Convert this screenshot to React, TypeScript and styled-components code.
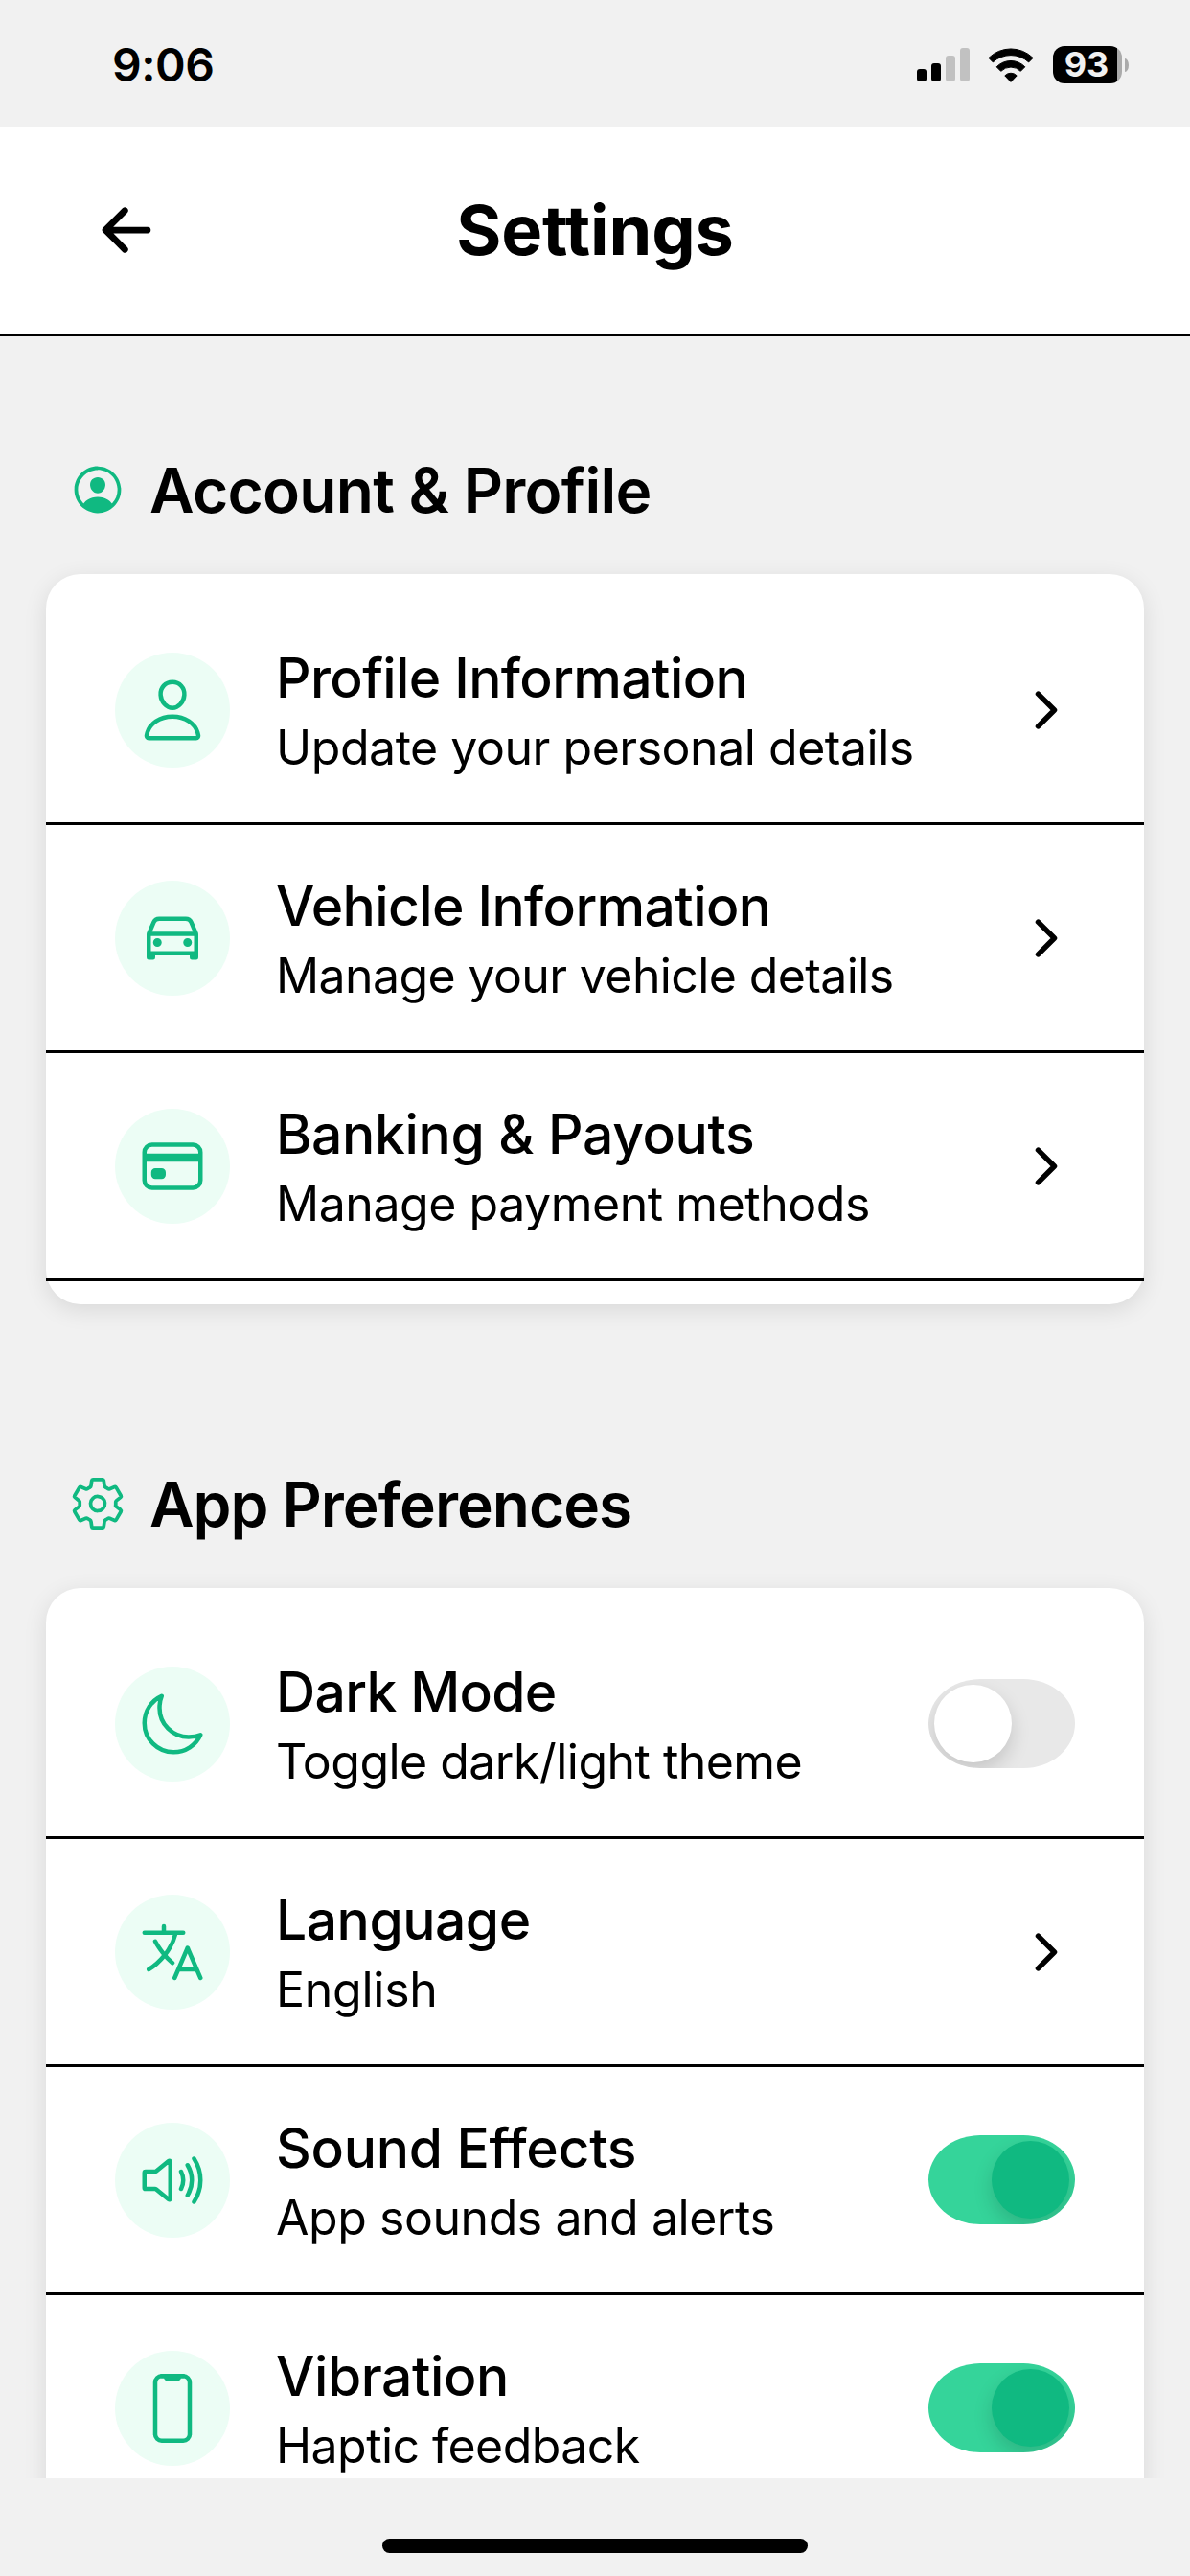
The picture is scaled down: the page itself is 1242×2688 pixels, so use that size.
import React, { useState } from 'react';
import styled, { createGlobalStyle } from 'styled-components';
import type { IconType } from 'react-icons';
import {
  IoArrowBack,
  IoCardOutline,
  IoCarOutline,
  IoChevronForward,
  IoLanguageOutline,
  IoMoonOutline,
  IoPersonCircleOutline,
  IoPersonOutline,
  IoPhonePortraitOutline,
  IoSettingsOutline,
  IoVolumeHighOutline,
} from 'react-icons/io5';

const color = {
  page: '#f1f1f1',
  surface: '#ffffff',
  text: '#000000',
  accent: '#10b981',
  accentTrack: '#35d49a',
  accentTint: '#ecfdf5',
  trackOff: '#e8e8e8',
  inactive: '#c1c1c1',
};

const GlobalStyle = createGlobalStyle`
  *, *::before, *::after { box-sizing: border-box; }
  body {
    margin: 0;
    background: ${color.page};
    color: ${color.text};
    font-family: Inter, "Liberation Sans", sans-serif;
  }
  svg { display: block; flex: none; }
`;

const Screen = styled.div`
  display: flex;
  flex-direction: column;
  width: 1242px;
  height: 2688px;
  overflow: hidden;
  background: ${color.page};
`;

/* Status bar */

const StatusBar = styled.div`
  flex: none;
  display: flex;
  justify-content: space-between;
  align-items: flex-start;
  height: 132px;
  padding: 48px 64px 0 117px;
`;

const Clock = styled.time`
  font-size: 48px;
  font-weight: 600;
  line-height: 39px;
  letter-spacing: -0.5px;
`;

const StatusIcons = styled.div`
  display: flex;
  align-items: center;
  height: 39px;
`;

const SignalBars = styled.div`
  display: flex;
  align-items: flex-end;
  gap: 5px;
  height: 35px;
  margin-right: 19px;
`;

const SignalBar = styled.span<{ $height: number; $active: boolean }>`
  width: 10px;
  height: ${({ $height }) => $height}px;
  border-radius: 3px;
  background: ${({ $active }) => ($active ? color.text : color.inactive)};
`;

const Battery = styled.div`
  display: flex;
  align-items: center;
  gap: 3px;
  margin-left: 20px;
`;

const BatteryBody = styled.div`
  display: flex;
  align-items: center;
  justify-content: center;
  width: 72px;
  height: 39px;
  padding-right: 2px;
  border-radius: 12px;
  background: linear-gradient(to right, #000 67px, #ababab 67px);
  color: ${color.page};
  font-size: 36px;
  font-weight: 700;
  line-height: 39px;
`;

const BatteryCap = styled.span`
  width: 4px;
  height: 14px;
  border-radius: 0 4px 4px 0 / 0 7px 7px 0;
  background: #ababab;
`;

/* Header */

const Header = styled.header`
  flex: none;
  display: grid;
  grid-template-columns: 72px 1fr 72px;
  align-items: center;
  height: 219px;
  padding: 0 96px;
  border-bottom: 3px solid ${color.text};
  background: ${color.surface};
`;

const PlainButton = styled.button`
  padding: 0;
  border: 0;
  background: none;
  color: inherit;
`;

const Title = styled.h1`
  margin: 0;
  font-size: 72px;
  font-weight: 700;
  line-height: 88px;
  letter-spacing: -0.1px;
  text-align: center;
`;

/* Content */

const Content = styled.main`
  flex: none;
  height: 2235px;
  overflow: hidden;
  padding: 110px 48px 0;
`;

const Section = styled.section`
  margin-bottom: 158px;
`;

const SectionHeader = styled.div`
  display: flex;
  align-items: center;
  gap: 24px;
  height: 100px;
  padding: 0 24px;
  margin-bottom: 38px;
  color: ${color.accent};
`;

const SectionTitle = styled.h2<{ $tracking: number }>`
  margin: 0;
  color: ${color.text};
  font-size: 64px;
  font-weight: 600;
  line-height: 80px;
  letter-spacing: ${({ $tracking }) => $tracking}px;
  padding-top: 1px;
`;

const Card = styled.div`
  padding: 24px 0;
  border-radius: 36px;
  background: ${color.surface};
  box-shadow: 0 6px 24px rgba(0, 0, 0, 0.1);
`;

const Row = styled.div`
  display: flex;
  align-items: center;
  height: 238px;
  padding: 1px 72px 0;
  border-bottom: 3px solid ${color.text};
`;

const IconBadge = styled.div`
  flex: none;
  display: flex;
  align-items: center;
  justify-content: center;
  width: 120px;
  height: 120px;
  margin-right: 48px;
  border-radius: 50%;
  background: ${color.accentTint};
  color: ${color.accent};
`;

const RowText = styled.div`
  flex: 1;
  white-space: nowrap;
`;

const RowTitle = styled.div<{ $tracking: number }>`
  font-size: 57px;
  font-weight: 500;
  line-height: 77px;
  letter-spacing: ${({ $tracking }) => $tracking}px;
`;

const RowDetail = styled.div<{ $tracking: number }>`
  font-size: 50px;
  font-weight: 400;
  line-height: 68px;
  letter-spacing: ${({ $tracking }) => $tracking}px;
`;

const SwitchTrack = styled.button<{ $on: boolean }>`
  flex: none;
  display: flex;
  align-items: center;
  justify-content: ${({ $on }) => ($on ? 'flex-end' : 'flex-start')};
  width: 153px;
  height: 93px;
  margin: 0 0 1px;
  padding: 0 6px;
  border: 0;
  border-radius: 54px / 46.5px;
  overflow: hidden;
  background: ${({ $on }) => ($on ? color.accentTrack : color.trackOff)};
`;

const SwitchThumb = styled.span<{ $on: boolean }>`
  width: 81px;
  height: 81px;
  border-radius: 50%;
  background: ${({ $on }) => ($on ? color.accent : color.surface)};
  box-shadow: 0 9px 20px rgba(0, 0, 0, 0.15);
`;

const HomeArea = styled.div`
  flex: 1;
  display: flex;
  justify-content: center;
  padding-top: 63px;
`;

const HomeIndicator = styled.div`
  width: 444px;
  height: 15px;
  border-radius: 8px;
  background: ${color.text};
`;

function WifiIcon() {
  return (
    <svg width="48" height="36" viewBox="0 0 48 36" fill="#000" stroke="#000" strokeWidth="1" strokeLinejoin="round">
      <path d="M0.9 10.4A33 33 0 0 1 47.1 10.4L42.7 14.9A27.6 27.6 0 0 0 5.3 14.9Z" />
      <path d="M9.2 19.8A20.5 20.5 0 0 1 38.8 19.8L34.3 24.3A14.6 14.6 0 0 0 13.7 24.3Z" />
      <path d="M17.8 28.9A8.6 8.6 0 0 1 30.2 28.9L24 35.4Z" />
    </svg>
  );
}

function Switch({ defaultOn }: { defaultOn: boolean }) {
  const [on, setOn] = useState(defaultOn);
  return (
    <SwitchTrack $on={on} role="switch" aria-checked={on} onClick={() => setOn(!on)}>
      <SwitchThumb $on={on} />
    </SwitchTrack>
  );
}

interface Item {
  icon: IconType;
  title: string;
  titleTracking: number;
  detail: string;
  detailTracking: number;
  toggle?: boolean;
}

interface Group {
  icon: IconType;
  title: string;
  tracking: number;
  items: Item[];
}

const groups: Group[] = [
  {
    icon: IoPersonCircleOutline,
    title: 'Account & Profile',
    tracking: -0.7,
    items: [
      { icon: IoPersonOutline, title: 'Profile Information', titleTracking: -0.61, detail: 'Update your personal details', detailTracking: -0.47 },
      { icon: IoCarOutline, title: 'Vehicle Information', titleTracking: -0.61, detail: 'Manage your vehicle details', detailTracking: -0.62 },
      { icon: IoCardOutline, title: 'Banking & Payouts', titleTracking: -0.35, detail: 'Manage payment methods', detailTracking: -0.46 },
    ],
  },
  {
    icon: IoSettingsOutline,
    title: 'App Preferences',
    tracking: -1,
    items: [
      { icon: IoMoonOutline, title: 'Dark Mode', titleTracking: -0.67, detail: 'Toggle dark/light theme', detailTracking: -0.54, toggle: false },
      { icon: IoLanguageOutline, title: 'Language', titleTracking: -0.5, detail: 'English', detailTracking: -0.27 },
      { icon: IoVolumeHighOutline, title: 'Sound Effects', titleTracking: -0.3, detail: 'App sounds and alerts', detailTracking: -0.45, toggle: true },
      { icon: IoPhonePortraitOutline, title: 'Vibration', titleTracking: -0.43, detail: 'Haptic feedback', detailTracking: -0.56, toggle: true },
    ],
  },
];

const signal = [13, 19, 27, 35];

export default function App() {
  return (
    <Screen>
      <GlobalStyle />
      <StatusBar>
        <Clock>9:06</Clock>
        <StatusIcons>
          <SignalBars>
            {signal.map((height, i) => (
              <SignalBar key={height} $height={height} $active={i < 2} />
            ))}
          </SignalBars>
          <WifiIcon />
          <Battery>
            <BatteryBody>93</BatteryBody>
            <BatteryCap />
          </Battery>
        </StatusIcons>
      </StatusBar>
      <Header>
        <PlainButton aria-label="Back">
          <IoArrowBack size={72} />
        </PlainButton>
        <Title>Settings</Title>
      </Header>
      <Content>
        {groups.map(({ icon: GroupIcon, title, tracking, items }) => (
          <Section key={title}>
            <SectionHeader>
              <GroupIcon size={60} />
              <SectionTitle $tracking={tracking}>{title}</SectionTitle>
            </SectionHeader>
            <Card>
              {items.map(({ icon: ItemIcon, ...item }) => (
                <Row key={item.title}>
                  <IconBadge>
                    <ItemIcon size={72} />
                  </IconBadge>
                  <RowText>
                    <RowTitle $tracking={item.titleTracking}>{item.title}</RowTitle>
                    <RowDetail $tracking={item.detailTracking}>{item.detail}</RowDetail>
                  </RowText>
                  {item.toggle === undefined ? <IoChevronForward size={60} /> : <Switch defaultOn={item.toggle} />}
                </Row>
              ))}
            </Card>
          </Section>
        ))}
      </Content>
      <HomeArea>
        <HomeIndicator />
      </HomeArea>
    </Screen>
  );
}
